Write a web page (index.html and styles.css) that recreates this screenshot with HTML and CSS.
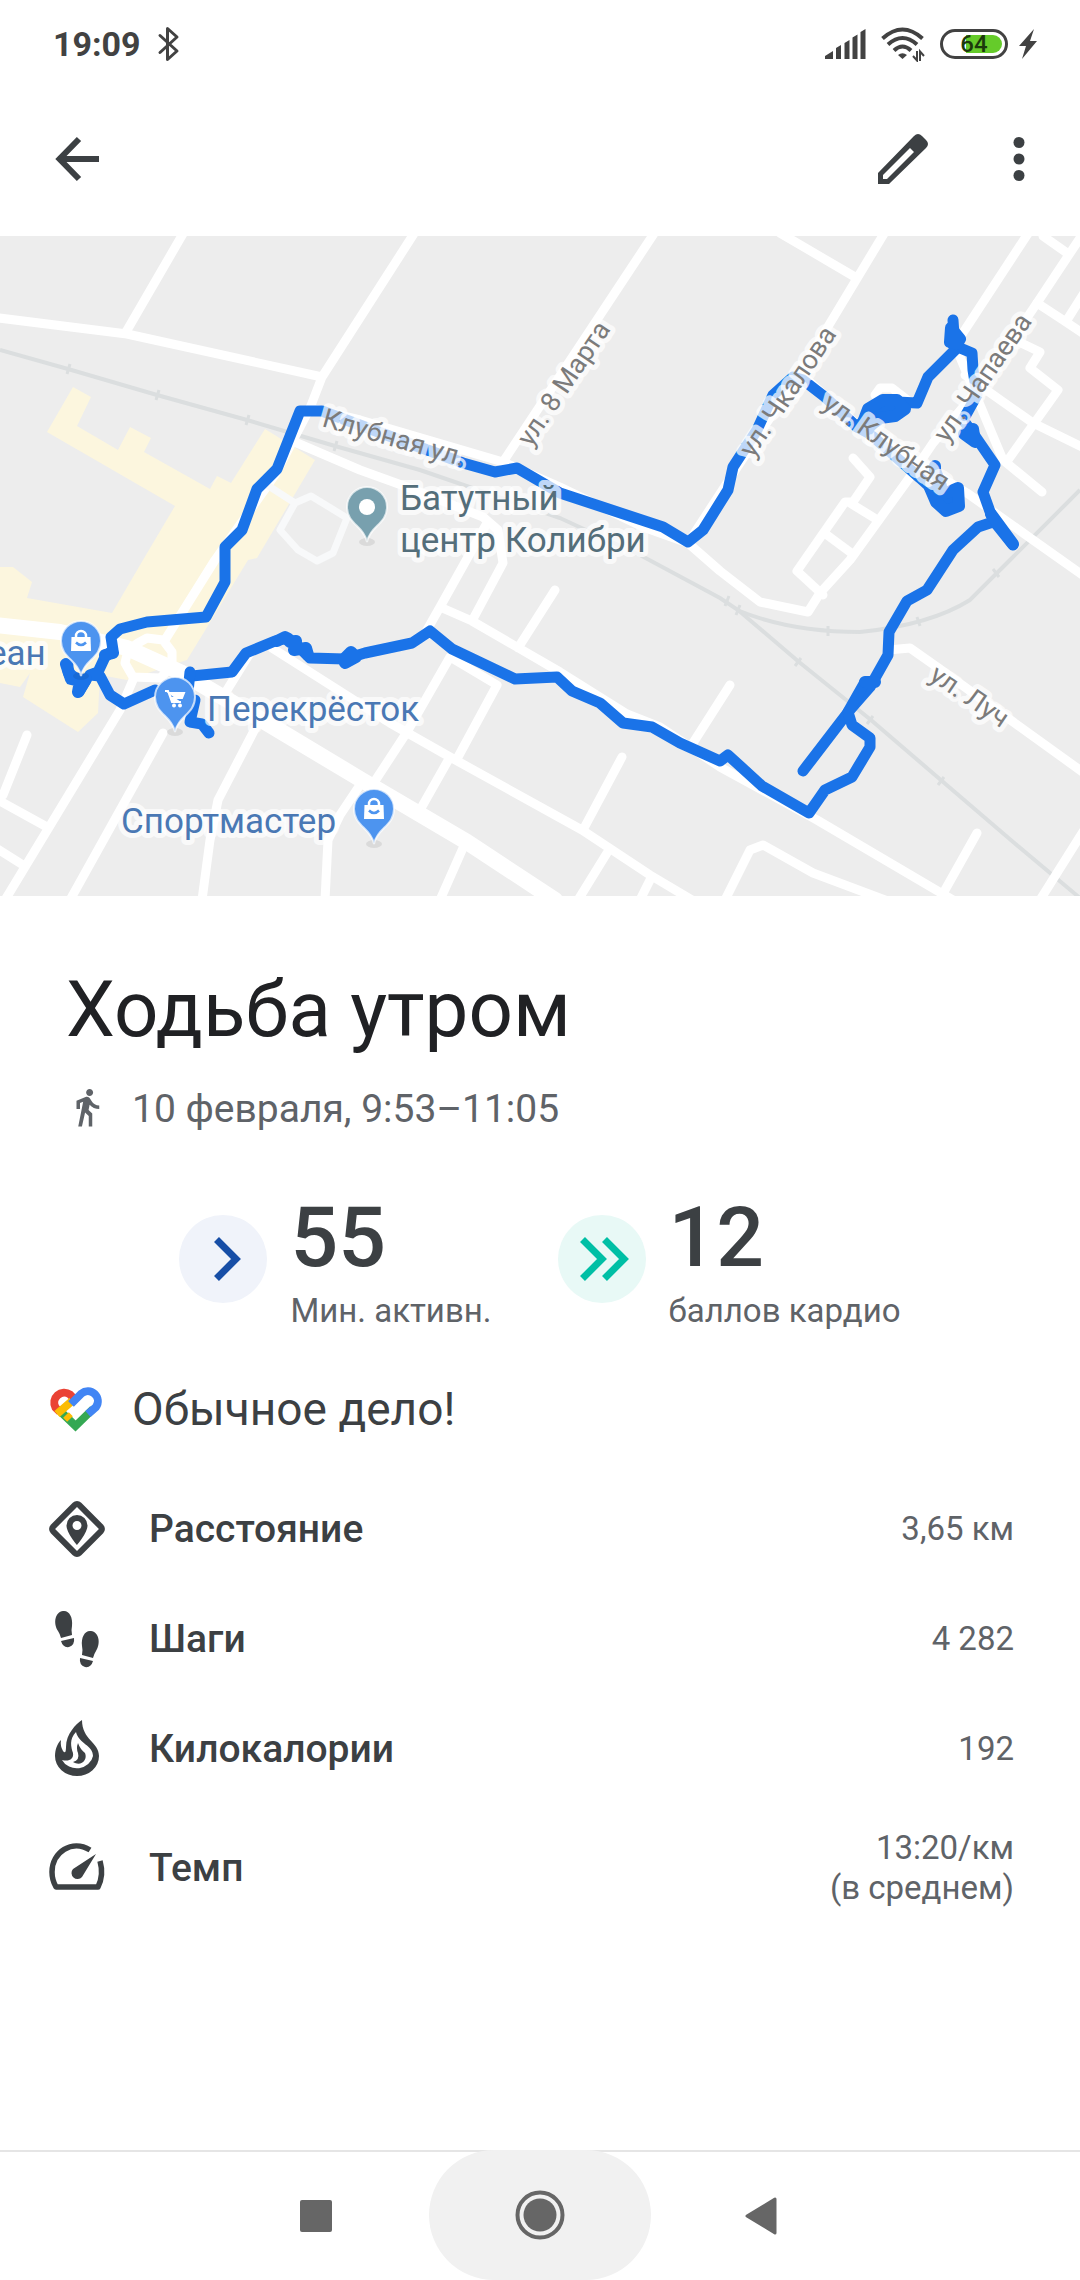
FILE: index.html
```html
<!DOCTYPE html>
<html lang="ru">
<head>
<meta charset="utf-8">
<meta name="viewport" content="width=device-width, initial-scale=1">
<title>Ходьба утром</title>
<link rel="stylesheet" href="styles.css">
</head>
<body>
<div class="status">
  <span class="clock">19:09</span>
  <svg class="bluetooth" width="24" height="36" viewBox="0 0 24 36" aria-hidden="true"><path d="M3 9.500l17 15.500-9.500 8.500V2.500L20 11 3 26.500" fill="none" stroke="currentColor" stroke-width="3" stroke-linejoin="round" stroke-linecap="round"/></svg>
  <div class="status-icons">
    <svg width="41" height="32" viewBox="0 0 41 32" aria-hidden="true"><path d="M0 31v-3l8-5v8zM11 31V20l5-3v14zM19.500 31V15l5-3v19zM27.500 31V9.500l5-3V31zM35.500 31V4l5-3v30z" fill="currentColor"/></svg>
    <svg width="44" height="36" viewBox="0 0 44 36" aria-hidden="true"><g fill="none" stroke="currentColor" stroke-width="4"><path d="M1.500 12.500Q21.500-5.500 41.500 12.500"/><path d="M7 18.500Q21.500 5.500 36 18.500"/><path d="M13 24.500Q21.500 16.500 30 24.500"/></g><path d="M17 29q4.500-3.500 9 0l-4.500 4z" fill="currentColor"/><path d="M36 25v9.500l-4-4.500M39 35v-9.500l4 4.500" fill="none" stroke="currentColor" stroke-width="2"/></svg>
    <span class="battery"><span class="battery-level" style="width:64%"></span><span class="battery-text">64</span></span>
    <svg class="bolt" width="20" height="30" viewBox="0 0 20 30" aria-hidden="true"><path d="M16 0L1 17h7L4 30l15-18h-7z" fill="currentColor"/></svg>
  </div>
</div>
<header class="appbar">
  <button class="icon-btn" aria-label="Назад"><svg width="48" height="48" viewBox="0 0 48 48"><path d="M26 4L6.500 24 26 44M6.500 24H46" fill="none" stroke="currentColor" stroke-width="6"/></svg></button>
  <button class="icon-btn push" aria-label="Изменить"><svg width="56" height="56" viewBox="0 0 56 56"><path fill="currentColor" fill-rule="evenodd" d="M3 53V42L39 5q4-4 8 0l4 4q4 4 0 8L14 53zM8 48h4l27-27-4-4L8 44z"/></svg></button>
  <button class="icon-btn" aria-label="Ещё"><svg width="48" height="48" viewBox="0 0 48 48"><g fill="currentColor"><circle cx="24" cy="7.500" r="5.500"/><circle cx="24" cy="24" r="5.500"/><circle cx="24" cy="40.500" r="5.500"/></g></svg></button>
</header>

<svg class="map" viewBox="0 236 1080 660" role="img" aria-label="Маршрут на карте">
  <defs>
    <g id="pin"><ellipse cx="0" cy="35" rx="8" ry="4" fill="#000" opacity=".08"/><path d="M0 35C-3 19-20 17-20 0A20 20 0 0 1 20 0C20 17 3 19 0 35z" stroke="#fff" stroke-opacity=".7" stroke-width="2"/></g>
    <g id="bag"><path d="M-9.500-4h19L10 10h-20z" fill="#fff"/><path d="M-5-3v-2a5 5 0 0 1 10 0v2" fill="none" stroke="#fff" stroke-width="2.500"/><path d="M-5 1.500q5 5 10 0" fill="none" stroke="#4d94ef" stroke-width="2.500"/></g>
  </defs>
  <rect y="236" width="1080" height="660" fill="#ededed"/>
  <path fill="#fcf6de" d="M73 387l18 10-14 29 41 24 12-23 21 11-7 14 66 37 7-13 14 7 34-54 50 31-58 98-9 2-61 100-60 20-27-5-2 38-20 19-55-35 7-24-10 14-20-4V567h13l19 15-5 16 85 15 31-53 32-54-128-74z"/>
  <g class="rail">
    <path d="M0 350L68 369 157 395 247 420 335 446 420 470 560 518 640 555 720 598 738 610 799 662 871 720 942 781 1012 841 1080 898"/>
    <path d="M737 610Q790 632 860 632Q930 625 970 600L1010 560 1080 490"/>
    <path class="ticks" d="M70 364l-3 10M159 390l-3 10M249 415l-3 10M337 441l-3 10M729 596l-4 10M740 605l-4 10M801 658l-6 8M873 716l-6 8M944 777l-6 8M828 626v10M917 617l3 9M993 569l6 8"/>
  </g>
  <g class="road">
    <path class="wide" d="M-5 625L60 632 127 648 180 672 260 719 360 779 467 842 555 900"/>
    <path d="M184 232L126 332M-5 317.500L127 334 322 377M415 232L322 377 310 408 275 475 215 560 165 640"/>
    <path d="M310 408L360 420 503 462 560 487 643 527 688 543 720 571 760 602 808 612 820 593 850 560 910 477 933 443 980 387 1037 303 1084 232"/>
    <path d="M655 232L503 462M885 232L800 373 740 463 688 543M780 233L855 277M800 373L860 427 967 493 1033 540 1084 576"/>
    <path d="M1029 232L955 345 1003 460 1042 492M1043 236L1067 253M1037 303L1063 320 1084 334M1067 320L1084 293M1015 340L1040 352 1030 368 1058 390 1008 460M965 375L1033 423 1084 448"/>
    <path d="M853 458L870 477 853 502 845 502 797 571 823 595M850 503L876 519M827 535L850 552M875 395L880 388 892 388 910 402"/>
    <path d="M290 440L360 470 407 487 483 517 498 530 503 563 472 621M487 523L440 607 423 637M440 607L472 621 560 672 627 714 660 727 720 767 817 820 953 900M555 590L518 648"/>
    <path d="M450 657L407 732 373 784M450 657L497 685 458 757M272 648L390 723 450 757 582 830 650 875 692 900M450 757L420 810M622 757L583 830M607 853L578 900M650 880L640 900M730 685L693 743M463 848L440 900"/>
    <path d="M250 653L227 690M133 680L120 710 5 900M163 733L70 900M257 725L218 800 210 840 202 900M360 785L340 815 328 840 325 900M27 735L3 795-4 799 47 827M-4 848L23 865"/>
    <path d="M138 643L147 638 163 640 172 652 172 667 160 678 133 677 125 663 128 650z"/>
    <path d="M888 650L910 648 937 667 1084 773M977 833L945 890M1084 830L1040 900M725 900L750 850 763 845 813 873 885 900"/>
    <path class="lane" d="M267 485L295 503 311 496 347 518 333 553 317 561 298 550 280 530 295 503"/>
  </g>
  <g class="route">
    <path d="M155 690L124 704 110 695 100 676 90 675 98 672 105 657 113 650 111 637 120 629 147 622 206 617 225 582V547L242 530 257 489 277 469 300 411 322 411 400 440 463 463 495 472 517 468 560 493 663 527 688 542 703 530 728 490 733 467 757 430 773 395 793 377 803 380 825 397 857 427 870 434 905 465 920 478 942 498"/>
    <path d="M857 427L870 415 897 402 917 403 928 377 955 350 953 320M953 345L972 353 973 370 977 395 963 420 973 433 995 465 983 492 993 520 1013 545M993 522L978 527 953 550 927 590 907 601 889 632 888 655 870 687 849 711 803 771"/>
    <path d="M192 676L232 672 246 653 275 641 288 638 300 648 310 658 345 659 365 653 412 643 430 631 452 649 515 679 557 677 572 691 600 703 623 723 652 727 680 743 720 761 728 755 762 786 809 813 825 790 852 777 870 747V738L852 725 848 712 865 682"/>
    <path d="M190 672l-2 20M195 700l-5 22 12 2 7 9"/>
    <path d="M68 665q-2 12 8 13l10 2-7 12"/>
    <g class="blob">
      <path d="M862 425l6-16 15-9h14l8 9-10 7-15 2-10 8zM930 488l6 14 10 9 13-5-1-18-14 6zM951 328l-1 14 7 2 3-5zM964 434l9-5 2 13zM991 514l22 30"/>
      <path d="M277 641l8-4 5 5 6-1-2 9 12-2 2 7M344 659l7-7 5 5-11 6M66 664l5 15 9 2-2 11 8-13M865 682h10M105 655l8-2"/>
      <path d="M935 466v4l6 16"/>
    </g>
  </g>
  <g class="street">
    <text transform="translate(321 426) rotate(16)">Клубная ул.</text>
    <text transform="translate(531 448) rotate(-56)">ул. 8 Марта</text>
    <text transform="translate(753 459) rotate(-56)">ул. Чкалова</text>
    <text transform="translate(947 444) rotate(-55)">ул. Чапаева</text>
    <text transform="translate(821 407) rotate(35)">ул. Клубная</text>
    <text transform="translate(928 679) rotate(34)">ул. Луч</text>
  </g>
  <g class="poi">
    <text class="leisure" x="400" y="510">Батутный</text>
    <text class="leisure" x="400" y="552">центр Колибри</text>
    <text x="-12" y="665">еан</text>
    <text x="207" y="721">Перекрёсток</text>
    <text x="121" y="833">Спортмастер</text>
  </g>
  <g transform="translate(367 507)"><use href="#pin" fill="#78a0ae"/><circle r="8" fill="#fff"/></g>
  <g transform="translate(81 641)"><use href="#pin" fill="#4d94ef"/><use href="#bag"/></g>
  <g transform="translate(374 809)"><use href="#pin" fill="#4d94ef"/><use href="#bag"/></g>
  <g transform="translate(175 697)"><use href="#pin" fill="#4d94ef"/><path d="M-10-6h3L-3 5h9M-6-4H9L7 1H-4z" fill="#fff" stroke="#fff" stroke-width="2"/><circle cx="-1" cy="8.500" r="2" fill="#fff"/><circle cx="5" cy="8.500" r="2" fill="#fff"/></g>
</svg>

<main class="content">
  <h1>Ходьба утром</h1>
  <p class="when"><svg width="42" height="42" viewBox="0 0 24 24" aria-hidden="true"><path fill="currentColor" d="M13.500 4.500c1.100 0 2-.9 2-2s-.9-2-2-2-2 .9-2 2 .9 2 2 2zM9.800 7.900L7 22h2.100l1.800-8 2.100 2v6h2v-7.500l-2.100-2 .6-3C14.800 11 16.800 12 19 12v-2c-1.900 0-3.500-1-4.300-2.400l-1-1.600c-.4-.6-1-1-1.700-1-.3 0-.5.1-.8.1L6 7.300V12h2V8.600l1.800-.7"/></svg><span>10 февраля, 9:53–11:05</span></p>
  <div class="scores">
    <div class="score">
      <svg class="disc" width="88" height="88" viewBox="0 0 88 88" aria-hidden="true"><circle cx="44" cy="44" r="44" fill="#f0f3fa"/><path d="M37.500 24.500L57 44 37.500 63.500" fill="none" stroke="#174ea6" stroke-width="7"/></svg>
      <div><strong>55</strong><span>Мин. активн.</span></div>
    </div>
    <div class="score">
      <svg class="disc" width="88" height="88" viewBox="0 0 88 88" aria-hidden="true"><circle cx="44" cy="44" r="44" fill="#e8f9f6"/><path d="M24.500 24.500L44 44 24.500 63.500M46.500 24.500L66 44 46.500 63.500" fill="none" stroke="#00bfa5" stroke-width="7"/></svg>
      <div><strong>12</strong><span>баллов кардио</span></div>
    </div>
  </div>
  <h2><svg width="56" height="48" viewBox="0 0 56 48" aria-hidden="true"><g fill="none" stroke-width="8"><path d="M29 17l-7-7.500A10 10 0 0 0 7.500 22.500L12 27" stroke="#ea4335"/><path d="M13 27L27.500 41 45 24" stroke="#34a853"/><path d="M9 29L24 16M22 34l-4-4" stroke="#fbbc04"/><path d="M40 29l8-7A10 10 0 0 0 33.500 8.500L23 19" stroke="#4285f4"/></g></svg><span>Обычное дело!</span></h2>
  <dl class="metrics">
    <div><dt><svg width="64" height="64" viewBox="0 0 64 64" aria-hidden="true"><rect x="13.500" y="13.500" width="37" height="37" rx="3" transform="rotate(45 32 32)" fill="none" stroke="currentColor" stroke-width="6"/><path fill="currentColor" fill-rule="evenodd" d="M32 18a10.500 10.500 0 0 1 10.500 10.500C42.500 36 32 48 32 48S21.500 36 21.500 28.500A10.500 10.500 0 0 1 32 18zm0 6a4.500 4.500 0 1 0 0 9 4.500 4.500 0 0 0 0-9z"/></svg>Расстояние</dt><dd>3,65 км</dd></div>
    <div><dt><svg width="64" height="64" viewBox="0 0 64 64" aria-hidden="true"><g fill="currentColor"><path id="foot" d="M18 4C24 3 28 10 27 19q-1 4 0 9l-11 3q-1-4-3-7C8 16 10 5 18 4zM16 34l13-3q1 7-5 9-6 1-8-6z"/><use href="#foot" transform="matrix(-1 0 0 1 64 20)"/></g></svg>Шаги</dt><dd>4 282</dd></div>
    <div><dt><svg width="64" height="64" viewBox="0 0 64 64" aria-hidden="true"><path fill="currentColor" fill-rule="evenodd" d="M37 3C31 7 21 17 21 30q0 8-3 4-3-5-2-11C12 27 10 33 10 39a22 20 0 0 0 44 0C54 25 37 23 37 3zM31 15C34 27 48 28 48 39a16.500 15 0 0 1-31 4C24 45 29 42 28 36 26 30 24 22 31 15z"/><path fill="currentColor" d="M33 26Q35 32 40 36C43 43 36 50 28 45q7-2 5-9-2-5 0-10z"/></svg>Килокалории</dt><dd>192</dd></div>
    <div><dt><svg width="64" height="64" viewBox="0 0 64 64" aria-hidden="true"><path d="M45 14C27 3 7 16 7 36q0 8 4 15h42q6-12 2-26" fill="none" stroke="currentColor" stroke-width="5.500" stroke-linejoin="round"/><path d="M51 18L37 41a6 6 0 1 1-9-8z" fill="currentColor"/></svg>Темп</dt><dd>13:20/км<br>(в среднем)</dd></div>
  </dl>
</main>
<nav class="navbar">
  <button aria-label="Недавние"><svg width="32" height="32" viewBox="0 0 32 32"><rect width="32" height="32" rx="2" fill="currentColor"/></svg></button>
  <button class="home" aria-label="Домой"><svg width="50" height="50" viewBox="0 0 50 50"><circle cx="25" cy="25" r="22.500" fill="none" stroke="currentColor" stroke-width="4"/><circle cx="25" cy="25" r="16.500" fill="currentColor"/></svg></button>
  <button aria-label="Назад"><svg width="32" height="38" viewBox="0 0 32 38"><path d="M2 19L30 2v34z" fill="currentColor" stroke="currentColor" stroke-width="3" stroke-linejoin="round"/></svg></button>
</nav>
</body>
</html>
```

FILE: styles.css
```css
* { box-sizing: border-box; }

body {
  margin: 0;
  min-height: 100vh;
  display: flex;
  flex-direction: column;
  background: #fff;
  color: #3c4043;
  font-family: Roboto, "Noto Sans", sans-serif;
}

svg { display: block; flex: none; }

button {
  display: flex;
  align-items: center;
  justify-content: center;
  padding: 0;
  border: 0;
  background: none;
  color: inherit;
}

/* System status bar */
.status {
  display: flex;
  align-items: center;
  height: 88px;
  padding: 0 42px 0 53px;
  color: #424242;
}
.clock { font-size: 34px; font-weight: 700; line-height: 40px; }
.bluetooth { margin-left: 16px; }
.status-icons { display: flex; align-items: center; gap: 15px; margin-left: auto; }
.bolt { margin-left: -5px; }
.battery {
  position: relative;
  width: 68px;
  height: 30px;
  padding: 3px;
  border: 3px solid #424242;
  border-radius: 15px;
  display: flex;
  justify-content: flex-end;
}
.battery-level { background: #65cb2a; border-radius: 0 9px 9px 0; }
.battery-text {
  position: absolute;
  inset: 0;
  color: #1c3a0c;
  font-size: 24px;
  font-weight: 500;
  line-height: 25px;
  text-align: center;
}

/* App bar */
.appbar {
  display: flex;
  align-items: center;
  height: 142px;
  margin-bottom: 6px;
  padding: 0 37px 0 53px;
}
.push { margin: 0 64px 0 auto; }

/* Map */
.map { width: 100%; height: auto; }
.road path { fill: none; stroke: #fff; stroke-width: 9; stroke-linejoin: round; stroke-linecap: round; }
.road .wide { stroke-width: 16; }
.road .lane { stroke: #f8f9fa; stroke-width: 7; }
.rail path { fill: none; stroke: #dbdedf; stroke-width: 4; }
.rail .ticks { stroke-width: 3; }
.route path { fill: none; stroke: #1a73e8; stroke-width: 11; stroke-linejoin: round; stroke-linecap: round; }
.route .blob path { fill: #1a73e8; stroke-width: 12; }
.street text, .poi text {
  paint-order: stroke;
  stroke: rgba(255, 255, 255, .72);
  stroke-width: 10px;
  stroke-linejoin: round;
}
.street text { fill: #7b7b7b; font-size: 27px; }
.poi text { fill: #4a78b4; font-size: 35px; }
.poi .leisure { fill: #546e7a; }

/* Workout summary */
.content { flex: 1; padding: 68px 48px 48px; }
h1 {
  margin: 0 0 31px 18px;
  color: #202124;
  font-size: 78px;
  font-weight: 400;
  line-height: 92px;
}
.when {
  display: flex;
  align-items: center;
  gap: 24px;
  margin: 0 0 67px 18px;
  color: #5f6368;
  font-size: 39px;
  line-height: 44px;
}
.scores { display: flex; justify-content: center; gap: 66px; margin-bottom: 53px; }
.score { display: flex; gap: 23px; }
.disc { margin-top: 17px; }
.score strong { display: block; margin-bottom: 13px; font-size: 84px; font-weight: 500; line-height: 80px; }
.score span { color: #5f6368; font-size: 33px; line-height: 40px; }
h2 {
  display: flex;
  align-items: center;
  gap: 28px;
  margin: 0 0 40px;
  font-size: 46px;
  font-weight: 400;
  line-height: 50px;
}
.metrics { margin: 0; }
.metrics > div {
  display: flex;
  align-items: center;
  justify-content: space-between;
  min-height: 110px;
  padding: 24px 18px 24px 0;
}
.metrics dt {
  display: flex;
  align-items: center;
  gap: 40px;
  margin-left: -3px;
  font-size: 39px;
  font-weight: 500;
  line-height: 44px;
}
.metrics dt svg { margin: -2px 0; }
.metrics dd { margin: 0; color: #5f6368; font-size: 33px; line-height: 40px; text-align: right; }

/* System navigation */
.navbar {
  display: grid;
  grid-template-columns: 1fr 222px 1fr;
  height: 130px;
  border-top: 2px solid #e5e5e5;
  color: #666;
}
.navbar button:first-child { justify-content: flex-end; padding-right: 97px; }
.navbar button:last-child { justify-content: flex-start; padding-left: 94px; }
.home { margin-top: -2px; border-radius: 65px; background: #f1f1f1; }
```
